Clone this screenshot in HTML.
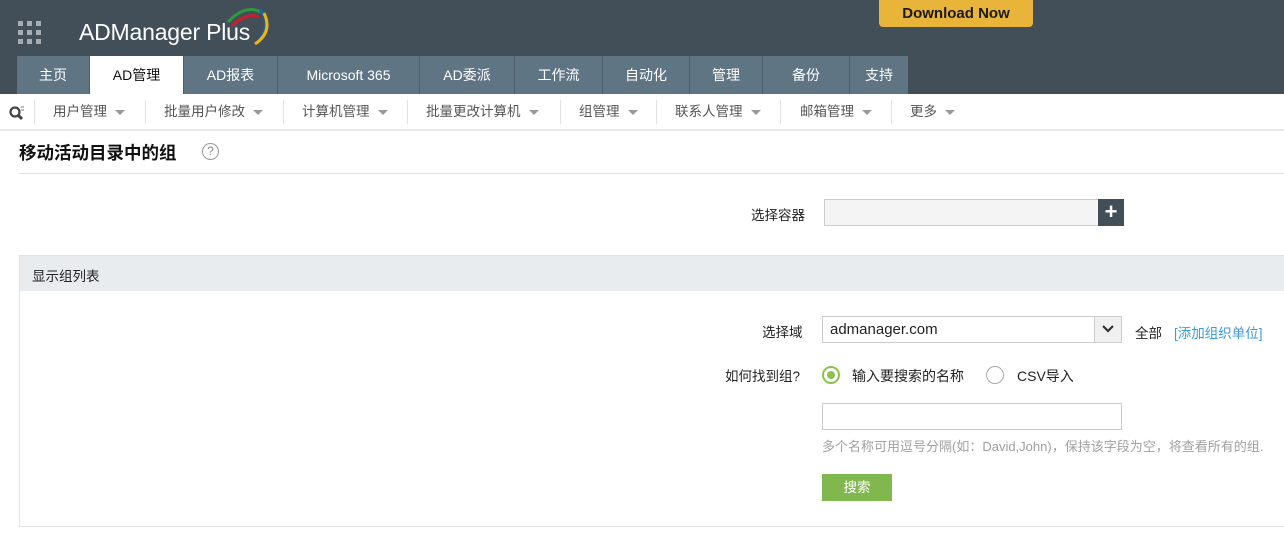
<!DOCTYPE html>
<html><head><meta charset="utf-8"><style>
*{margin:0;padding:0;box-sizing:border-box}
body{width:1284px;height:551px;overflow:hidden;background:#fff;font-family:"Liberation Sans","Noto Sans CJK SC",sans-serif;font-size:13.5px;color:#222;position:relative}
.abs{position:absolute}
#hdr{left:0;top:0;width:1284px;height:94px;background:#434f58}
.tab{position:absolute;top:56px;height:38px;background:#607584;color:#fff;font-size:14px;line-height:38px;text-align:center;border-right:1px solid #4d5d69}
.tab.on{background:#fff;color:#111}
.sub{position:absolute;top:94px;height:36px;line-height:36px;font-size:13.5px;color:#555}
.sep{position:absolute;top:100px;width:1px;height:24px;background:#e2e2e2}
.car{display:inline-block;width:0;height:0;border-left:5px solid transparent;border-right:5px solid transparent;border-top:5px solid #999;vertical-align:middle;margin-left:8px}
</style></head><body>
<div id="hdr" class="abs"></div>
<div class="abs" style="left:18px;top:21px;width:24px;height:24px">
<svg width="24" height="24"><g fill="#a5adb3"><rect x="0" y="0" width="5" height="5"/><rect x="9" y="0" width="5" height="5"/><rect x="18" y="0" width="5" height="5"/><rect x="0" y="9" width="5" height="5"/><rect x="9" y="9" width="5" height="5"/><rect x="18" y="9" width="5" height="5"/><rect x="0" y="18" width="5" height="5"/><rect x="9" y="18" width="5" height="5"/><rect x="18" y="18" width="5" height="5"/></g></svg></div>
<div class="abs" style="left:79px;top:19px;color:#fff;font-size:23px;letter-spacing:-0.2px">ADManager Plus</div>
<svg class="abs" style="left:225px;top:4px" width="48" height="42"><path d="M3 18 Q20 0 36 8" stroke="#2e9a3e" stroke-width="3" fill="none"/><path d="M7 22 Q22 8 34 13" stroke="#c8202f" stroke-width="3" fill="none"/><path d="M35 5 Q47 20 34 36" stroke="#1f5fa8" stroke-width="3" fill="none"/><path d="M39 9 Q48 28 30 40" stroke="#f2b500" stroke-width="3" fill="none"/></svg>
<div class="abs" style="left:879px;top:0;width:154px;height:27px;background:#e9b43a;border-radius:0 0 4px 4px;color:#1a1a1a;font-weight:bold;font-size:15px;text-align:center;line-height:27px">Download Now</div>
<div class="tab" style="left:17px;width:73px">主页</div>
<div class="tab on" style="left:90px;width:94px">AD管理</div>
<div class="tab" style="left:184px;width:94px">AD报表</div>
<div class="tab" style="left:278px;width:142px">Microsoft 365</div>
<div class="tab" style="left:420px;width:95px">AD委派</div>
<div class="tab" style="left:515px;width:88px">工作流</div>
<div class="tab" style="left:603px;width:87px">自动化</div>
<div class="tab" style="left:690px;width:73px">管理</div>
<div class="tab" style="left:763px;width:87px">备份</div>
<div class="tab" style="left:850px;width:58px;border:none">支持</div>
<svg class="abs" style="left:8px;top:104px" width="18" height="18"><circle cx="7" cy="8" r="4.5" stroke="#444" stroke-width="2.2" fill="none"/><path d="M10 11 L14 15" stroke="#444" stroke-width="3"/><path d="M13 3h3M13 6h3" stroke="#777" stroke-width="1"/></svg>
<div class="sep" style="left:34px"></div>
<div class="sub" style="left:53px">用户管理<span class="car"></span></div>
<div class="sep" style="left:145px"></div>
<div class="sub" style="left:164px">批量用户修改<span class="car"></span></div>
<div class="sep" style="left:283px"></div>
<div class="sub" style="left:302px">计算机管理<span class="car"></span></div>
<div class="sep" style="left:407px"></div>
<div class="sub" style="left:426px">批量更改计算机<span class="car"></span></div>
<div class="sep" style="left:560px"></div>
<div class="sub" style="left:579px">组管理<span class="car"></span></div>
<div class="sep" style="left:656px"></div>
<div class="sub" style="left:675px">联系人管理<span class="car"></span></div>
<div class="sep" style="left:780px"></div>
<div class="sub" style="left:800px">邮箱管理<span class="car"></span></div>
<div class="sep" style="left:891px"></div>
<div class="sub" style="left:910px">更多<span class="car"></span></div>
<div class="abs" style="left:0;top:129px;width:1284px;height:2px;background:#e6eaea"></div>
<div class="abs" style="left:19px;top:140px;font-size:17.5px;font-weight:bold;color:#111">移动活动目录中的组</div>
<div class="abs" style="left:202px;top:143px;width:17px;height:17px;border:1.5px solid #999;border-radius:50%;color:#888;font-size:12px;text-align:center;line-height:14px">?</div>
<div class="abs" style="left:19px;top:173px;width:1265px;height:1px;background:#e2e2e2"></div>
<div class="abs" style="left:751px;top:204px">选择容器</div>
<div class="abs" style="left:824px;top:199px;width:275px;height:27px;background:#f4f4f4;border:1px solid #ccc"></div>
<div class="abs" style="left:1098px;top:199px;width:26px;height:27px;background:#434f58;color:#fff;font-size:22px;font-weight:bold;text-align:center;line-height:26px">+</div>
<div class="abs" style="left:19px;top:255px;width:1265px;height:272px;border:1px solid #e2e2e2;border-right:none"></div>
<div class="abs" style="left:20px;top:256px;width:1264px;height:35px;background:#e9ecee"></div>
<div class="abs" style="left:32px;top:265px">显示组列表</div>
<div class="abs" style="left:762px;top:321px">选择域</div>
<div class="abs" style="left:822px;top:316px;width:300px;height:27px;border:1px solid #ccc;background:#fff;font-size:15px;line-height:25px;padding-left:7px">admanager.com</div>
<div class="abs" style="left:1094px;top:317px;width:27px;height:25px;background:#f0f0f0;border-left:1px solid #ccc"></div>
<svg class="abs" style="left:1101px;top:324px" width="14" height="10"><path d="M2 2 L7 7 L12 2" stroke="#333" stroke-width="2.2" fill="none"/></svg>
<div class="abs" style="left:1135px;top:322px">全部</div>
<div class="abs" style="left:1174px;top:322px;color:#3b9ad8">[添加组织单位]</div>
<div class="abs" style="left:725px;top:365px">如何找到组?</div>
<div class="abs" style="left:822px;top:366px;width:18px;height:18px;border:2px solid #8bc34a;border-radius:50%"></div>
<div class="abs" style="left:827px;top:371px;width:8px;height:8px;background:#8bc34a;border-radius:50%"></div>
<div class="abs" style="left:852px;top:366px;font-size:14px">输入要搜索的名称</div>
<div class="abs" style="left:986px;top:366px;width:18px;height:18px;border:1.5px solid #aaa;border-radius:50%"></div>
<div class="abs" style="left:1017px;top:366px;font-size:14px">CSV导入</div>
<div class="abs" style="left:822px;top:403px;width:300px;height:27px;border:1px solid #ccc"></div>
<div class="abs" style="left:822px;top:436px;color:#a0a0a0;font-size:13px">多个名称可用逗号分隔(如：David,John)，保持该字段为空，将查看所有的组.</div>
<div class="abs" style="left:822px;top:474px;width:70px;height:27px;background:#80b84e;color:#fff;text-align:center;line-height:27px">搜索</div>
</body></html>
